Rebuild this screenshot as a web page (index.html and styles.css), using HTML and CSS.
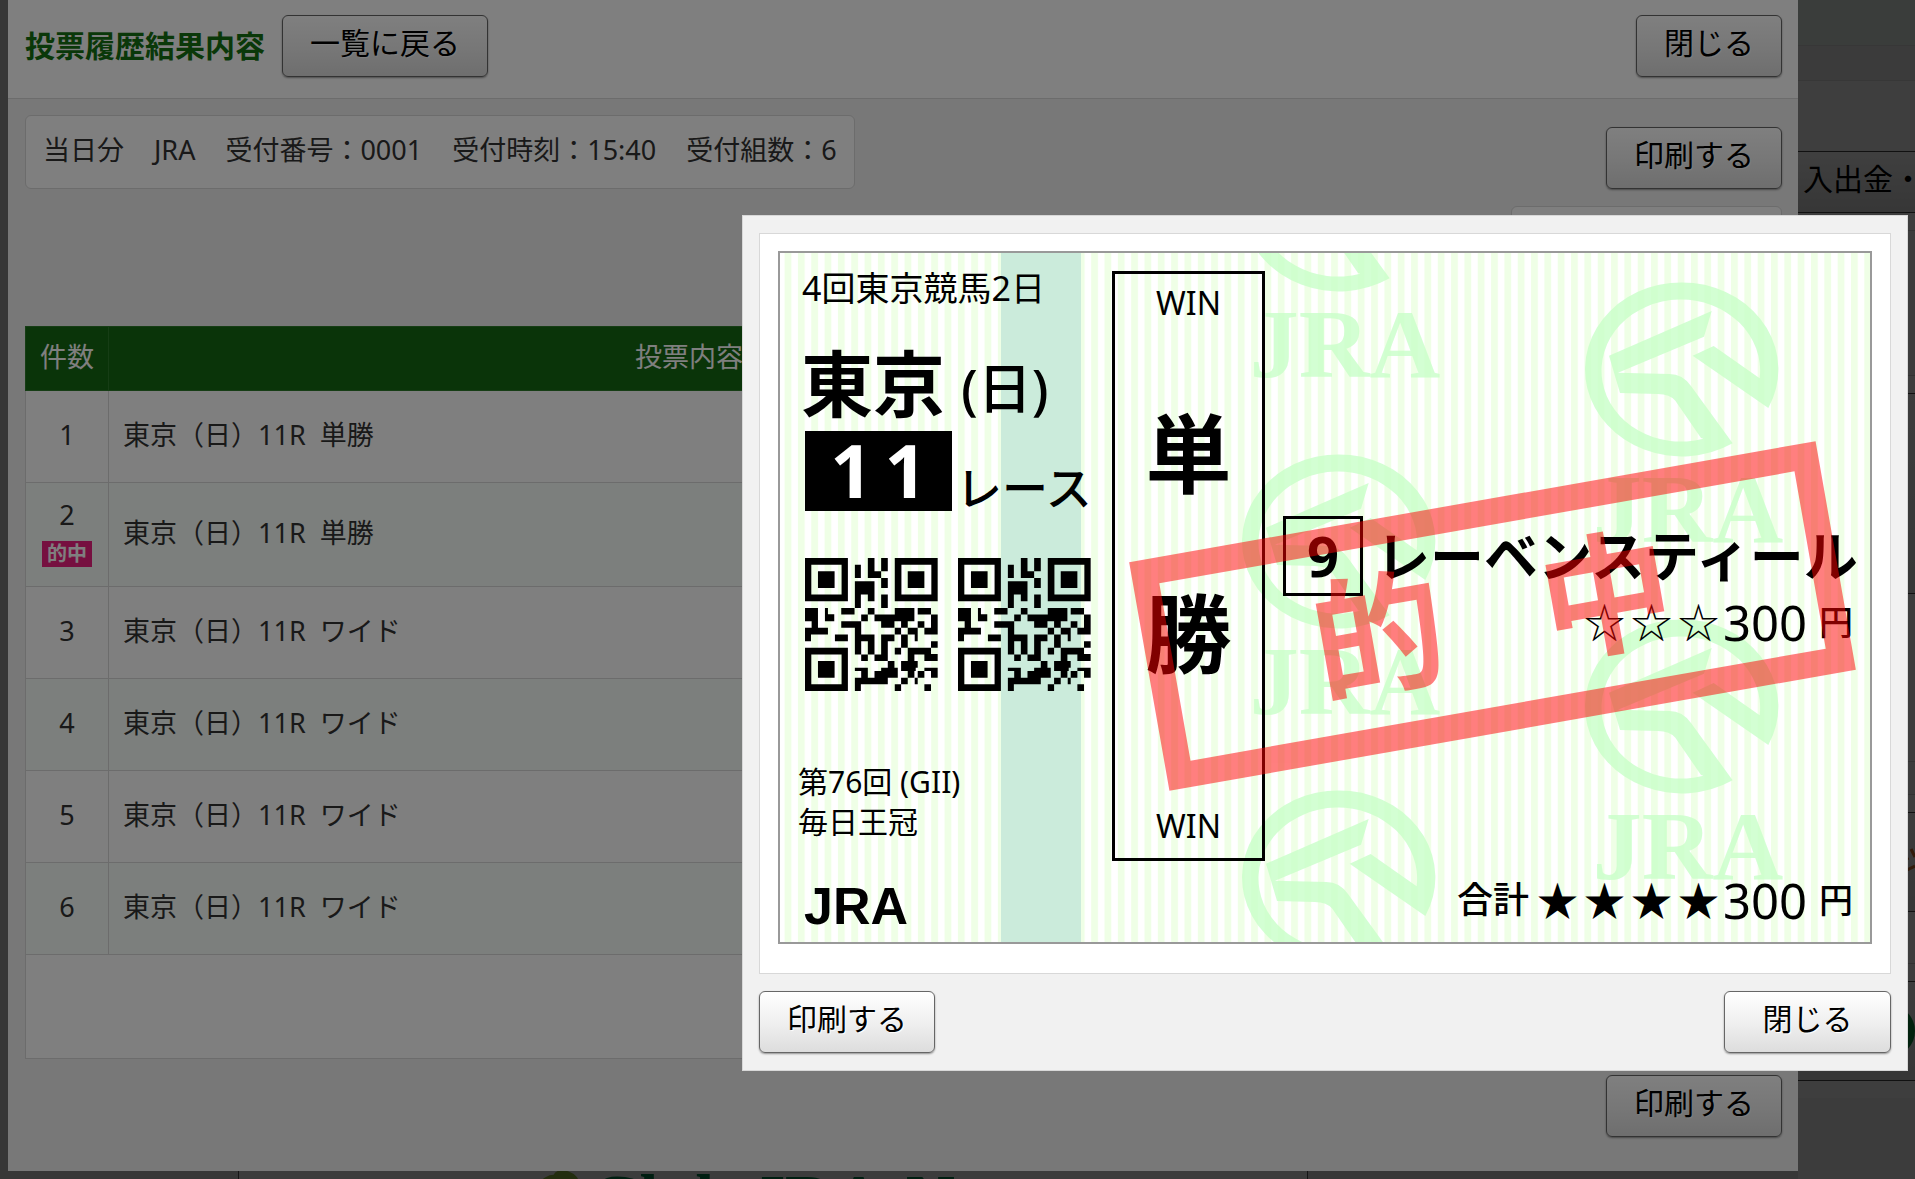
FILE: index.html
```html
<!DOCTYPE html>
<html lang="ja">
<head>
<meta charset="utf-8">
<title>投票履歴結果内容</title>
<link rel="stylesheet" href="styles.css">
</head>
<body>
<div class="site">
  <div class="site-main">
    <div class="site-foot">
      <svg class="leaf" viewBox="0 0 44 20" aria-hidden="true"><ellipse cx="12" cy="14" rx="13" ry="9" transform="rotate(-30 12 14)"/><ellipse cx="28" cy="8" rx="13" ry="8" transform="rotate(20 28 8)"/></svg>
      <span class="site-logo">Club JRA-Net</span>
    </div>
  </div>
  <div class="site-side">
    <div class="side-top"></div>
    <div class="side-a"></div>
    <div class="side-b"></div>
    <div class="side-nav">入出金・</div>
    <div class="side-gap"></div>
    <div class="side-c"></div>
    <div class="side-gap"></div>
    <div class="side-panel"></div>
    <div class="side-d"></div>
    <div class="side-e"></div>
    <div class="side-gap"></div>
    <div class="side-panel short"><svg viewBox="0 0 12 36" class="side-icon" aria-hidden="true"><path d="M1 9l4 7M8 5l4 8M0 28l12-6" stroke="#c86a28" stroke-width="3" fill="none"/></svg></div>
    <div class="side-f"></div>
    <div class="side-gap"></div>
    <div class="side-panel short"><span class="side-dot"></span></div>
    <div class="side-gap"></div>
  </div>
</div>
<div class="shade"></div>

<section class="panel">
  <header class="panel-head">
    <h1>投票履歴結果内容</h1>
    <button type="button" class="btn">一覧に戻る</button>
    <button type="button" class="btn push">閉じる</button>
  </header>
  <div class="panel-body">
    <div class="info-row">
      <p class="info"><span>当日分</span><span>JRA</span><span>受付番号：0001</span><span>受付時刻：15:40</span><span>受付組数：6</span></p>
      <button type="button" class="btn">印刷する</button>
    </div>
    <div class="summary"></div>
    <table class="bets">
      <thead>
        <tr><th class="c-no">件数</th><th class="c-bet">投票内容</th><th></th></tr>
      </thead>
      <tbody>
        <tr><td class="no">1</td><td>東京（日）11R&nbsp; 単勝</td><td></td></tr>
        <tr class="tall"><td class="no">2<span class="hit">的中</span></td><td>東京（日）11R&nbsp; 単勝</td><td></td></tr>
        <tr><td class="no">3</td><td>東京（日）11R&nbsp; ワイド</td><td></td></tr>
        <tr><td class="no">4</td><td>東京（日）11R&nbsp; ワイド</td><td></td></tr>
        <tr><td class="no">5</td><td>東京（日）11R&nbsp; ワイド</td><td></td></tr>
        <tr><td class="no">6</td><td>東京（日）11R&nbsp; ワイド</td><td></td></tr>
      </tbody>
      <tfoot><tr class="tall"><td colspan="3"></td></tr></tfoot>
    </table>
    <div class="panel-foot"><button type="button" class="btn">印刷する</button></div>
  </div>
</section>
<div class="shade"></div>

<section class="dialog" role="dialog" aria-label="馬券">
  <div class="sheet">
    <div class="ticket">
      <svg class="ticket-bg" viewBox="780 253 1090 689" preserveAspectRatio="xMinYMin slice" aria-hidden="true">
        <defs>
          <pattern id="stripe" x="784.6" y="0" width="13.33" height="20" patternUnits="userSpaceOnUse"><rect width="6.8" height="20" fill="#efffe6"/></pattern>
          <g id="mark" fill="#c8ffc8" fill-opacity="0.8">
            <path transform="scale(0.3333) translate(-335 -300)" d="M597 414A290 261 0 1 0 490 520L365 348Q340 312 300 312L146 308 404 200 427 123 119 257 152 369 265 372Q302 373 318 392L395 504 402 506A238 213 0 1 1 571 325L433 228 370 257Z"/>
            <text x="7" y="172" text-anchor="middle">JRA</text>
          </g>
        </defs>
        <rect x="780" y="253" width="1090" height="689" fill="#fff"/>
        <rect x="784" y="253" width="1086" height="689" fill="url(#stripe)"/>
        <rect x="1001" y="253" width="80" height="689" fill="#cbebdb"/>
        <use href="#mark" x="1338" y="205"/>
        <use href="#mark" x="1338" y="542"/>
        <use href="#mark" x="1338" y="878"/>
        <use href="#mark" x="1681" y="370"/>
        <use href="#mark" x="1681" y="707"/>
      </svg>
      <svg width="0" height="0" class="defs" aria-hidden="true">
        <symbol id="qr" viewBox="45 38 400 400">
          <path fill-rule="evenodd" d="M45 38h129v130H45zM64 58v90h91V58zM84 78h50v50H84zM315 38h129v130H315zM335 58v90h90V58zM354 78h50v50h-50zM45 308h129v130H45zM64 328v90h91v-90zM84 348h50v50H84z"/>
          <path d="M195 58h18v40h-18zM234 38h20v60h-20zM253 78h21v20h-21zM274 38h20v40h-20zM274 98h20v30h-20zM195 108h59v40h-59zM195 147h18v41h-18zM234 147h20v21h-20zM274 148h20v40h-20z
          M45 188h39v40H45zM65 227h19v22H65zM45 248h69v20H45zM45 267h18v21H45zM105 188h9v20h-9zM105 207h28v21h-28zM154 188h40v20h-40zM234 188h20v20h-20zM315 188h59v21h-59zM384 188h40v20h-40z
          M214 208h20v20h-20zM254 208h120v20H254zM424 208h20v60h-20zM154 228h60v20h-60zM274 227h40v21h-40zM334 228h20v20h-20zM384 228h20v20h-20z
          M195 247h19v81h-19zM315 248h19v20h-19zM354 248h30v20h-30zM404 248h21v20h-21zM135 268h39v20h-39zM213 268h41v20h-41zM234 287h20v41h-20zM274 268h40v20h-40zM274 287h20v61h-20zM334 268h20v40h-20zM375 267h9v21h-9zM424 288h20v20h-20z
          M315 308h19v20h-19zM354 308h70v20h-70zM214 328h20v20h-20zM254 328h21v20h-21zM354 327h20v22h-20zM404 327h40v21h-40z
          M294 348h20v21h-20zM334 348h50v20h-50zM195 368h39v10h-39zM214 377h20v22h-20zM254 378h70v20h-70zM274 368h50v11h-50zM334 367h44v11h-44zM354 377h20v21h-20zM384 378h20v20h-20zM404 368h40v10h-40zM424 377h20v21h-20z
          M195 398h99v20h-99zM334 398h20v20h-20zM375 398h9v20h-9zM195 417h18v21h-18zM315 418h19v20h-19zM404 418h20v20h-20z"/>
        </symbol>
      </svg>

      <div class="t-left">
        <p class="meet">4回東京競馬2日</p>
        <p class="place">東京<span>(日)</span></p>
        <p class="race"><span class="race-no"><b>1</b><b>1</b></span><span class="race-label">レース</span></p>
        <div class="codes"><svg><use href="#qr"/></svg><svg><use href="#qr"/></svg></div>
        <p class="title">第76回 (GII)<br>毎日王冠</p>
        <p class="org">JRA</p>
      </div>
      <div class="t-type"><span>WIN</span><b>単</b><b>勝</b><span>WIN</span></div>
      <div class="t-right">
        <p class="horse"><span class="horse-no">9</span><span>レーベンスティール</span></p>
        <p class="amount"><span class="stars"><i>☆</i><i>☆</i><i>☆</i></span>300<span class="yen">円</span></p>
        <p class="amount total"><span class="sum">合計</span><span class="stars"><i>★</i><i>★</i><i>★</i><i>★</i></span>300<span class="yen">円</span></p>
      </div>
      <div class="stamp"><span>的</span><span>中</span></div>
    </div>
  </div>
  <div class="dialog-foot">
    <button type="button" class="btn">印刷する</button>
    <button type="button" class="btn wide">閉じる</button>
  </div>
</section>
</body>
</html>
```
FILE: styles.css
```css
* { box-sizing: border-box; }
body {
  margin: 0;
  min-height: 100vh;
  position: relative;
  overflow-x: hidden;
  color: #333;
  font-family: "Noto Sans", "Noto Sans CJK JP", sans-serif;
  font-size: 27px;
}
h1, p { margin: 0; }

/* page behind the layers */
.site {
  position: absolute;
  inset: 0;
  display: grid;
  grid-template-columns: 1fr 117px;
  background: #f0f0f0;
  overflow: hidden;
}
.site-main { display: flex; align-items: flex-end; background: #dcdcdc; }
.site-foot {
  display: flex;
  flex: 1;
  justify-content: center;
  height: 8px;
  margin: 0 490px 0 238px;
  overflow: hidden;
  border: solid #555;
  border-width: 0 1px;
  background: #f0f0f0;
}
.leaf { width: 44px; height: 20px; flex: none; fill: #8fb43c; }
.site-logo {
  margin-left: 8px;
  color: #007a44;
  font: bold 68px/54px "Liberation Serif", serif;
  white-space: nowrap;
}
.site-side { display: flex; flex-direction: column; }
.side-top { height: 45px; background: #e8f4ec; }
.side-a { height: 36px; border: solid #ddd; border-width: 1px 0; background: #ececec; }
.side-b { height: 70px; background: #f8f8f8; }
.side-nav {
  height: 62px;
  padding-left: 5px;
  border: solid #444;
  border-width: 1px 0;
  background: linear-gradient(#fff, #dcdcdc);
  color: #000;
  font-size: 30px;
  line-height: 54px;
  white-space: nowrap;
  overflow: hidden;
}
.side-gap { height: 17px; background: #f8f8f8; }
.side-c { height: 146px; border: solid #ccc; border-width: 1px 0; }
.side-panel { height: 201px; border: solid #444; border-width: 1px 0; background: linear-gradient(#f4f4f4, #dcdcdc); }
.side-panel.short { height: 100px; display: flex; align-items: center; justify-content: flex-end; }
.side-d { height: 167px; background: #f4f4f4; }
.side-e { height: 34px; border: solid #ccc; border-width: 1px 0; }
.side-f { height: 52px; border-bottom: 1px solid #ccc; background: #f8f8f8; }
.side-icon { width: 12px; height: 36px; }
.side-dot { width: 52px; height: 52px; border-radius: 50%; background: #0a8a3a; }

.shade { position: absolute; inset: 0; background: rgba(0, 0, 0, 0.5); }

.btn {
  flex: none;
  height: 62px;
  padding: 0 27px 6px;
  border: 1px solid #666;
  border-radius: 6px;
  background: linear-gradient(#fff, #f0f0f0 50%, #ddd);
  box-shadow: 0 1px 2px rgba(0, 0, 0, 0.4);
  color: #000;
  font-family: inherit;
  font-size: 30px;
  line-height: 40px;
  text-shadow: 1px 1px 1px #fff;
}
.push { margin-left: auto; }

/* result panel */
.panel { position: relative; margin: 0 117px 0 8px; background: #f0f0f0; }
.panel-head {
  display: flex;
  align-items: center;
  height: 99px;
  padding: 0 16px 6px 17px;
  border-bottom: 1px solid #d8d8d8;
  background: #fff;
}
h1 { margin-right: 17px; color: #147012; font-size: 30px; line-height: 40px; }
.panel-body { padding: 16px 16px 34px 17px; }
.info-row { display: flex; align-items: flex-end; justify-content: space-between; }
.info {
  display: flex;
  gap: 30px;
  height: 74px;
  padding: 0 17px;
  border: 1px solid #d8d8d8;
  border-radius: 6px;
  background: #fff;
  line-height: 68px;
}
.summary {
  width: 271px;
  height: 103px;
  margin: 17px 0 17px auto;
  border: 1px solid #d8d8d8;
  border-radius: 6px;
  background: #fff;
}
.bets { width: 100%; border-collapse: collapse; table-layout: fixed; }
.bets th { height: 64px; padding: 0 0 6px; border: 1px solid #2c7a2a; background: #146812; color: #fff; font-weight: 400; }
.c-no { width: 83px; }
.c-bet { width: 1161px; }
.bets td { height: 92px; padding: 0 14px 4px; border: 1px solid #d8d8d8; background: #fff; line-height: 32px; }
.bets tbody tr:nth-child(even) td { background: #f8fefa; }
.bets .tall td { height: 104px; }
.bets .no { padding: 0 0 4px; text-align: center; }
.hit {
  display: block;
  width: 50px;
  height: 26px;
  margin: 10px auto 0;
  background: #ec2080;
  color: #fff;
  font-size: 20px;
  font-weight: 700;
  line-height: 25px;
}
.panel-foot { display: flex; justify-content: flex-end; padding-top: 16px; }

/* ticket dialog */
.dialog {
  position: absolute;
  top: 215px;
  right: 7px;
  width: 1166px;
  padding: 17px 16px;
  border: 1px solid #d8d8d8;
  background: #f1f1f1;
  color: #000;
}
.sheet { padding: 17px 18px 29px; border: 1px solid #d8d8d8; background: #fff; }
.dialog-foot { display: flex; justify-content: space-between; padding-top: 17px; }
.btn.wide { width: 167px; }
.ticket {
  position: relative;
  display: grid;
  grid-template-columns: 332px 153px minmax(0, 1fr);
  border: 2px solid #999;
  overflow: hidden;
}
.ticket-bg { position: absolute; inset: 0; width: 100%; height: 100%; }
.ticket-bg text { font: bold 98px "Liberation Serif", serif; }
.defs { position: absolute; }
.t-left, .t-type, .t-right { position: relative; white-space: nowrap; }
.t-left { padding: 13px 0 10px 18px; }
.meet { padding-left: 4px; font-size: 34px; line-height: 45px; }
.place {
  display: flex;
  align-items: flex-end;
  gap: 16px;
  margin-top: 36px;
  padding-left: 3px;
  font-size: 72px;
  font-weight: 700;
  line-height: 72px;
}
.place span { font-size: 54px; font-weight: 500; line-height: 62px; }
.race { display: flex; align-items: flex-end; gap: 4px; margin-top: 12px; padding-left: 7px; }
.race-no {
  display: flex;
  justify-content: center;
  gap: 12px;
  width: 147px;
  height: 80px;
  background: #000;
  color: #fff;
  font-size: 74px;
  line-height: 77px;
}
.race-label { font-size: 46px; font-weight: 500; line-height: 48px; }
.codes { display: flex; gap: 20px; margin-top: 47px; padding-left: 7px; }
.codes svg { width: 133px; height: 133px; }
.title { margin-top: 71px; font-size: 30px; line-height: 40px; }
.org { margin-top: 38px; padding-left: 6px; font: bold 52px/52px "Liberation Sans", sans-serif; }
.t-type {
  display: flex;
  flex-direction: column;
  align-items: center;
  margin: 18px 0 81px;
  padding: 9px 0 12px;
  border: 3px solid #000;
  font-size: 32px;
  line-height: 40px;
}
.t-type b { margin-top: 82px; font-size: 86px; line-height: 98px; }
.t-type span:last-child { margin-top: auto; }
.t-right { padding: 263px 17px 18px 18px; }
.horse { display: flex; align-items: center; gap: 13px; font-size: 54px; font-weight: 700; line-height: 58px; }
.horse-no { flex: none; width: 80px; height: 80px; border: 3px solid #000; font-size: 56px; line-height: 73px; text-align: center; }
.amount { display: flex; align-items: center; justify-content: flex-end; margin-top: 2px; font-size: 49px; line-height: 48px; }
.total { margin-top: 230px; }
.stars { display: flex; gap: 6px; margin-right: 4px; font-size: 41px; }
.stars i { font-style: normal; }
.yen { margin-left: 12px; font-size: 34px; font-weight: 500; }
.sum { margin-right: 8px; font-size: 36px; font-weight: 500; }
.stamp {
  position: absolute;
  left: 364px;
  top: 247px;
  display: flex;
  align-items: center;
  justify-content: center;
  gap: 99px;
  width: 697px;
  height: 232px;
  padding-bottom: 6px;
  border: 26px solid #f00;
  color: #f00;
  font-size: 132px;
  font-weight: 700;
  line-height: 132px;
  opacity: 0.5;
  transform: rotate(-10deg);
}
```
